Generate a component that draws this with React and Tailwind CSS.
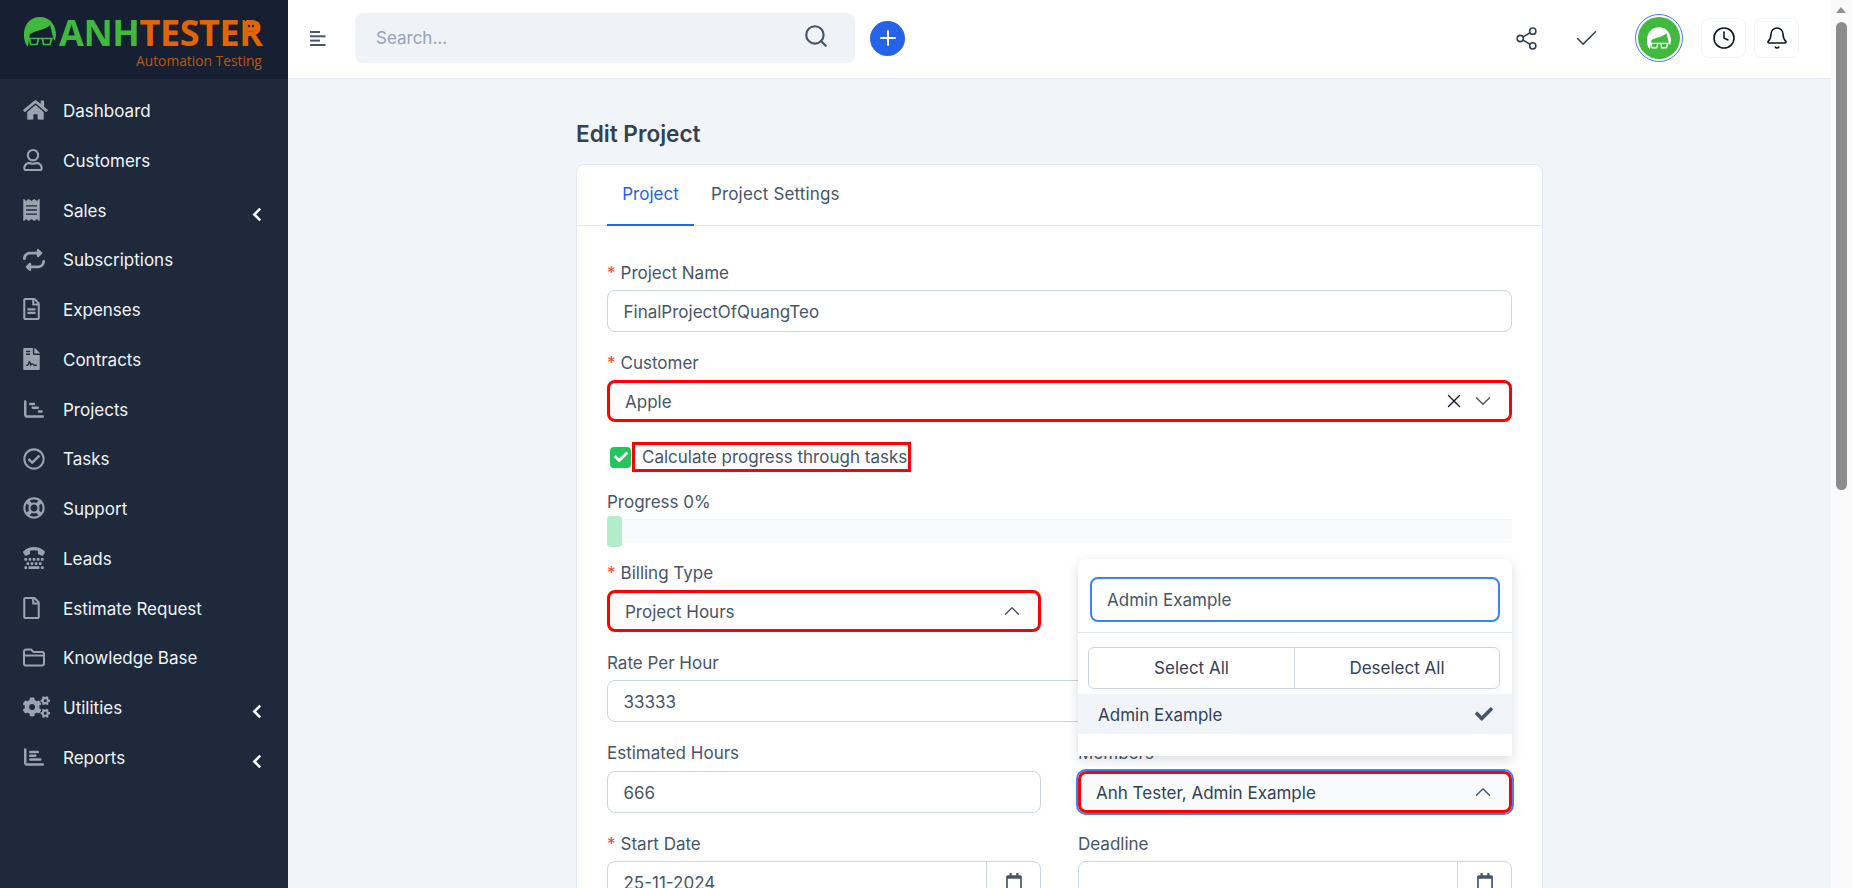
import React from 'react';
import { FaHome, FaRegUser, FaReceipt, FaRegFileAlt, FaFileContract, FaRegCheckCircle, FaRegLifeRing, FaTty, FaRegFile, FaCogs, FaCheck, FaRegCalendar } from 'react-icons/fa';
import { FaRepeat, FaChartGantt, FaChartBar } from 'react-icons/fa6';
import { ChevronUp, ChevronDown, X, Search, Plus, Share2, Check, Clock, Bell } from 'lucide-react';

// Folder with a line under the tab, the FA one has no inner line
const FolderIcon = ({ className }) => (
  <svg viewBox="0 0 22 19" className={className} fill="none" stroke="currentColor" strokeWidth="2">
    <path d="M1 3.5a2 2 0 0 1 2-2h5l2.5 2.5H19a2 2 0 0 1 2 2v9.5a2 2 0 0 1-2 2H3a2 2 0 0 1-2-2z" />
    <path d="M1 7.5h20" />
  </svg>
);

const MENU = [
  { label: 'Dashboard', icon: FaHome, size: 'w-[25px] h-[22px]' },
  { label: 'Customers', icon: FaRegUser, size: 'w-[20px] h-[22px]' },
  { label: 'Sales', icon: FaReceipt, size: 'w-[17px] h-[22px]', arrow: true },
  { label: 'Subscriptions', icon: FaRepeat, size: 'w-[22px] h-[22px]' },
  { label: 'Expenses', icon: FaRegFileAlt, size: 'w-[17px] h-[22px]' },
  { label: 'Contracts', icon: FaFileContract, size: 'w-[17px] h-[22px]' },
  { label: 'Projects', icon: FaChartGantt, size: 'w-[22px] h-[20px]' },
  { label: 'Tasks', icon: FaRegCheckCircle, size: 'w-[22px] h-[22px]' },
  { label: 'Support', icon: FaRegLifeRing, size: 'w-[22px] h-[22px]' },
  { label: 'Leads', icon: FaTty, size: 'w-[22px] h-[22px]' },
  { label: 'Estimate Request', icon: FaRegFile, size: 'w-[17px] h-[22px]' },
  { label: 'Knowledge Base', icon: FolderIcon, size: 'w-[22px] h-[19px]' },
  { label: 'Utilities', icon: FaCogs, size: 'w-[27px] h-[22px]', arrow: true },
  { label: 'Reports', icon: FaChartBar, size: 'w-[22px] h-[20px]', arrow: true },
];

// Hair and glasses, used in the logo and in the avatar
const Head = ({ className, hair, glass }) => (
  <svg viewBox="0 0 32 30" className={className}>
    <path fill={hair} d="M0 20C-1 8 6 0 16 0c10 0 16 8 16 18l-1 6c-1-1-2-3-2.500-6L26 8c-5 5-13 5-20 9l-1 5-1 8c-2-2-3.500-5-4-10z" />
    <path fill="none" stroke={glass} strokeWidth="1.700" strokeLinejoin="round" d="M4 21.500h25M5.500 21.500l1 6h6.500l1.500-6M18.500 21.500l1 6H26l1.500-6" />
  </svg>
);

const Logo = () => (
  <div className="h-[79px] bg-[#172033] relative shrink-0">
    <Head className="absolute left-[24px] top-[17px] w-[32px] h-[30px]" hair="#41b83e" glass="#41b83e" />
    <div className="absolute left-[59px] top-[18px] font-['Open_Sans',sans-serif] font-bold text-[36px] leading-[30px] tracking-[-0.4px] whitespace-nowrap">
      <span className="text-[#41b83e]">ANH</span>
      <span className="text-[#e06505]">TESTER</span>
    </div>
    {/* the little bug sitting on the R */}
    <svg viewBox="0 0 20 20" className="absolute left-[241px] top-[14px] w-[20px] h-[20px]">
      <path d="M5 7L1 2M15 7l4-5" stroke="#0b1120" strokeWidth="1.2" fill="none" />
      <circle cx="10" cy="12" r="5.5" fill="#e06505" />
      <circle cx="8" cy="12" r="1.2" fill="#172033" />
      <circle cx="12" cy="12" r="1.2" fill="#172033" />
    </svg>
    <div className="absolute left-[136px] top-[51px] font-['Open_Sans',sans-serif] text-[13.8px] leading-[20px] text-[#b9580f] whitespace-nowrap">
      Automation Testing
    </div>
  </div>
);

const ChevronLeftSmall = () => (
  <svg viewBox="0 0 9 14" className="w-[10px] h-[15px] -ml-[9px] -mt-[7px]" fill="none" stroke="#f8fafc" strokeWidth="2.4">
    <path d="M7.5 1.500L2 7l5.500 5.500" />
  </svg>
);

const Sidebar = () => (
  <aside className="w-[288px] shrink-0 h-full bg-[#1e293b] flex flex-col">
    <Logo />
    <nav className="pt-[7.5px]">
      {MENU.map((item) => {
        const Icon = item.icon;
        return (
          <div key={item.label} className="h-[49.75px] flex items-center pl-[23px] pr-[27px] text-[17px] text-[#f1f5f9]">
            <span className="w-[40px] shrink-0 -mt-[2px] text-[#9ca3af]">
              <Icon className={item.size} />
            </span>
            <span className="flex-1 pt-[1px]">{item.label}</span>
            {item.arrow && <span className="mt-[6px] w-0 h-0"><ChevronLeftSmall /></span>}
          </div>
        );
      })}
    </nav>
  </aside>
);

const Hamburger = () => (
  <svg viewBox="0 0 16 15" className="w-[16px] h-[15px] text-[#475569]" fill="currentColor">
    <rect y="0" width="10" height="2" />
    <rect y="4.300" width="15.500" height="2" />
    <rect y="8.600" width="10" height="2" />
    <rect y="13" width="15.500" height="2" />
  </svg>
);

const Header = () => (
  <header className="h-[79px] shrink-0 bg-white border-b border-[#e2e8f0] flex items-center pl-[22px] pb-[2px]">
    <Hamburger />
    <div className="ml-[29px] w-[500px] h-[50px] rounded-lg bg-[#eff2f7] flex items-center pl-[21px] pr-[26px] text-[17px] text-[#94a3b8]">
      <span className="flex-1 pt-[2px]">Search...</span>
      <Search className="w-[26px] h-[26px] text-[#475569] -mt-[4px]" strokeWidth={2} />
    </div>
    <button className="ml-[15px] w-[35px] h-[35px] rounded-full bg-[#2563eb] flex items-center justify-center">
      <Plus className="w-[24px] h-[24px] text-white" strokeWidth={2} />
    </button>
    <div className="ml-auto flex items-center pr-[32px]">
      <Share2 className="w-[25px] h-[25px] text-[#334155]" strokeWidth={1.5} />
      <Check className="ml-[34px] w-[27px] h-[27px] text-[#334155]" strokeWidth={1.3} />
      <div className="ml-[35px] w-[48px] h-[48px] rounded-full border-[1.5px] border-[#3b82f6] flex items-center justify-center">
        <div className="w-[42px] h-[42px] rounded-full bg-[#41b83e] flex items-center justify-center">
          <Head className="w-[24px] h-[23px]" hair="#ffffff" glass="#ffffff" />
        </div>
      </div>
      <div className="ml-[18px] w-[45px] h-[40px] rounded-lg border border-[#f1f5f9] flex items-center justify-center">
        <Clock className="w-[24px] h-[24px] text-[#0f172a]" strokeWidth={1.6} />
      </div>
      <div className="ml-[8px] w-[45px] h-[40px] rounded-lg border border-[#f1f5f9] flex items-center justify-center">
        <Bell className="w-[24px] h-[24px] text-[#0f172a]" strokeWidth={1.6} />
      </div>
    </div>
  </header>
);

const Label = ({ required, children, className = '' }) => (
  <div className={`h-[24px] leading-[26px] text-[17px] text-[#475569] ${className}`}>
    {required && <span className="text-[#ef4444] mr-[5px]">*</span>}
    {children}
  </div>
);

const TextInput = ({ value }) => (
  <div className="h-[42px] rounded-lg border border-[#cbd5e1] bg-white flex items-center pl-[15.5px] pt-[4px] text-[17px] text-[#475569]">
    {value}
  </div>
);

const DateInput = ({ value }) => (
  <div className="h-[42px] rounded-lg border border-[#cbd5e1] bg-white flex items-center pl-[15.5px] text-[17px] text-[#475569]">
    <span className="flex-1 pt-[4px]">{value}</span>
    <span className="w-[54px] h-full border-l border-[#cbd5e1] flex items-center justify-center">
      <FaRegCalendar className="w-[16px] h-[18px] text-[#475569]" />
    </span>
  </div>
);

// Select that the test tool has marked with a red border
const RedSelect = ({ value, children }) => (
  <div className="h-[42px] rounded-lg border-[3px] border-[#ff0000] bg-white flex items-center pl-[15px] pr-[13.5px] text-[17px] text-[#475569]">
    <span className="flex-1 pt-[4px]">{value}</span>
    {children}
  </div>
);

const MembersDropdown = () => (
  <div className="absolute left-0 bottom-full mb-[15px] w-[434px] h-[197px] bg-white rounded-t-lg shadow-[0_4px_12px_rgba(15,23,42,0.15)] z-10">
    <div className="h-[74px] px-[12px] pt-[18px] border-b border-[#e2e8f0]">
      <div className="h-[45px] rounded-lg border-2 border-[#3b82f6] flex items-center pl-[15px] pt-[2px] text-[17px] text-[#475569]">
        Admin Example
      </div>
    </div>
    <div className="mt-[14px] ml-[10px] mr-[12px] h-[42px] flex rounded-md border border-[#cbd5e1] text-[17px] text-[#334155]">
      <button className="w-[206px] pt-[2px] border-r border-[#cbd5e1]">Select All</button>
      <button className="flex-1 pt-[2px]">Deselect All</button>
    </div>
    <div className="mt-[5px] h-[40px] bg-[#f1f5f9] flex items-center pl-[20px] pr-[18px] text-[17px] text-[#334155]">
      <span className="flex-1 pt-[3px]">Admin Example</span>
      <FaCheck className="w-[20px] h-[18px] text-[#475569]" />
    </div>
  </div>
);

const ProjectForm = () => (
  <div className="w-[967px] bg-white rounded-t-lg border border-[#e2e8f0]">
    <div className="h-[61px] border-b border-[#e2e8f0] flex pl-[30px] text-[17px]">
      <div className="w-[87px] h-[61px] flex items-center justify-center text-[#2563eb] border-b-2 border-[#2563eb]">Project</div>
      <div className="ml-[17px] h-[61px] flex items-center text-[#475569] border-b-2 border-transparent tracking-[0.15px]">Project Settings</div>
    </div>
    <div className="px-[30px] pt-[34px]">
      <Label required className="mb-[6px]">Project Name</Label>
      <TextInput value="FinalProjectOfQuangTeo" />
      <Label required className="mt-[18px] mb-[6px]">Customer</Label>
      <RedSelect value="Apple">
        <X className="w-[22px] h-[22px] text-[#0f172a]" strokeWidth={1.5} />
        <ChevronDown className="ml-[4.5px] w-[26px] h-[26px] text-[#475569]" strokeWidth={1.3} />
      </RedSelect>

      <div className="mt-[20px] h-[30px] flex items-center pl-[3px]">
        <span className="w-[21px] h-[21px] rounded bg-[#22c55e] flex items-center justify-center">
          <FaCheck className="w-[14px] h-[14px] text-white" />
        </span>
        <span className="ml-px h-[30px] border-[3px] border-[#ff0000] flex items-center pl-[7px] pr-[1px] pt-[2px] text-[17px] text-[#475569]">
          Calculate progress through tasks
        </span>
      </div>

      <Label className="mt-[17px]">Progress 0%</Label>
      <div className="relative mt-[6px] h-[23px] bg-[#f8fafc] border-y border-[#f1f5f9]">
        <div className="absolute left-0 -top-[4px] w-[15px] h-[31px] rounded bg-[#b3ecc9]" />
      </div>

      <div className="mt-[18px] grid grid-cols-2 gap-x-[37px]">
        <div>
          <Label required className="mb-[6px]">Billing Type</Label>
          <RedSelect value="Project Hours">
            <ChevronUp className="w-[26px] h-[26px] text-[#475569]" strokeWidth={1.3} />
          </RedSelect>
        </div>
        <div />
        <div className="col-span-2 mt-[18px]">
          <Label className="mb-[6px]">Rate Per Hour</Label>
          <TextInput value="33333" />
        </div>
        <div className="mt-[18px]">
          <Label className="mb-[7px]">Estimated Hours</Label>
          <TextInput value="666" />
        </div>
        <div className="mt-[18px]">
          <Label className="mb-[7px]">Members</Label>
          <div className="relative">
            <MembersDropdown />
            <div className="h-[42px] rounded-lg border-[3px] border-[#ff0000] bg-[#f8fafc] outline-2 outline-[#3b82f6] flex items-center pl-[15px] pr-[13.5px] text-[17px] text-[#334155]">
              <span className="flex-1 pt-[4px]">Anh Tester, Admin Example</span>
              <ChevronUp className="w-[26px] h-[26px] text-[#475569]" strokeWidth={1.3} />
            </div>
          </div>
        </div>
        <div className="mt-[18px]">
          <Label required className="mb-[6px]">Start Date</Label>
          <DateInput value="25-11-2024" />
        </div>
        <div className="mt-[18px]">
          <Label className="mb-[6px]">Deadline</Label>
          <DateInput value="" />
        </div>
      </div>
    </div>
  </div>
);

const Scrollbar = () => (
  <div className="w-[21px] shrink-0 h-full bg-[#fafafa] pl-[5px]">
    <div className="pt-[7px]">
      <div className="w-0 h-0 border-x-[5.5px] border-x-transparent border-b-[6px] border-b-[#909090]" />
    </div>
    <div className="mt-[9px] w-[11px] h-[468px] rounded-full bg-[#8c8c8c]" />
  </div>
);

const App = () => {
  return (
    <div className="w-[1852px] h-[888px] overflow-hidden flex bg-[#f1f5f9] font-['Inter',sans-serif]">
      <Sidebar />
      <div className="flex-1 min-w-0 flex flex-col">
        <Header />
        <main className="flex-1 min-h-0 overflow-hidden pl-[288px] pt-[40px]">
          <h1 className="h-[30px] leading-[30px] text-[22.6px] font-semibold text-[#334155] mb-[15px]">Edit Project</h1>
          <ProjectForm />
        </main>
      </div>
      <Scrollbar />
    </div>
  );
};

export default App;
